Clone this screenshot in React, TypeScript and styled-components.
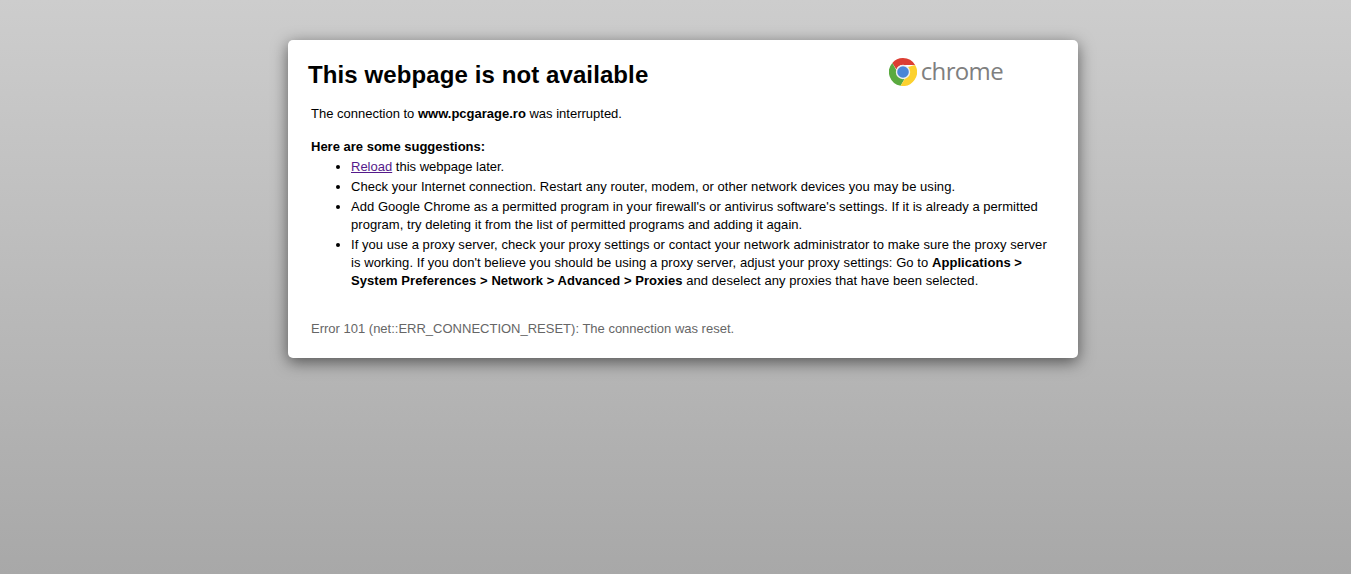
import styled, { createGlobalStyle } from 'styled-components'

const Global = createGlobalStyle`
  html, body {
    margin: 0;
    height: 100%;
  }
  body {
    background: linear-gradient(#cdcdcd, #a8a8a8);
    background-repeat: no-repeat;
    font-family: "Liberation Sans", Arial, sans-serif;
    font-size: 13px;
    color: #000;
  }
`

const Page = styled.div`
  min-height: 574px;
  padding: 40px 0 0 288px;
  box-sizing: border-box;
`

const Card = styled.main`
  width: 790px;
  height: 318px;
  padding: 18px 20px 0;
  box-sizing: border-box;
  background: #fff;
  border-radius: 5px;
  box-shadow: 0 4px 16px rgba(0, 0, 0, 0.55);
`

const Header = styled.header`
  display: flex;
  justify-content: space-between;
  height: 36px;
`

const Title = styled.h1`
  margin: 0;
  font-size: 24px;
  line-height: 34px;
  letter-spacing: 0.1px;
  font-weight: bold;
`

const Logo = styled.div`
  display: flex;
  align-items: center;
  gap: 4px;
  height: 28px;
  margin-right: 55px;
`

const Wordmark = styled.span`
  font-family: "Open Sans", "Noto Sans", sans-serif;
  font-size: 24px;
  line-height: 28px;
  letter-spacing: -0.65px;
  color: #7f7f7f;
  padding-bottom: 3px;
`

const Body = styled.div`
  padding: 0 3px;
`

const Paragraph = styled.p`
  margin: 11px 0 15px;
  line-height: 18px;
`

const Heading = styled.div`
  font-weight: bold;
  line-height: 18px;
`

const List = styled.ul`
  margin: 2px 0 0;
  padding: 0 0 0 40px;
  width: 704px;
`

const Item = styled.li<{ $spread?: number }>`
  line-height: 18px;
  margin-bottom: 2px;
  letter-spacing: ${(p) => (p.$spread ? `${p.$spread}px` : 'normal')};
`

const Visited = styled.a`
  color: #551a8b;
  text-decoration: underline;
`

const ErrorCode = styled.div`
  margin-top: 30px;
  line-height: 18px;
  color: #666;
`

function ChromeLogo() {
  return (
    <svg width="28" height="28" viewBox="0 0 28 28" aria-hidden="true">
      <path d="M14 0a14 14 0 0 1 12.1 7H14a7 7 0 0 0-6.6 4.6L3.3 4.9A14 14 0 0 1 14 0z" fill="#dc3e33" />
      <path d="M3.3 4.9l5.9 10.5a7 7 0 0 0 6.5 5.4L11.600 27.800A14 14 0 0 1 3.300 4.900z" fill="#5aaa3f" />
      <path d="M26.100 7A14 14 0 0 1 11.600 27.800l5.900-9.800A7 7 0 0 0 18.800 9z" fill="#fcd12f" />
      <circle cx="14" cy="14" r="7.200" fill="#f1f1f1" />
      <circle cx="14" cy="14" r="5.800" fill="#4a86d8" />
    </svg>
  )
}

export default function App() {
  return (
    <>
      <Global />
      <Page>
        <Card>
          <Header>
            <Title>This webpage is not available</Title>
            <Logo>
              <ChromeLogo />
              <Wordmark>chrome</Wordmark>
            </Logo>
          </Header>
          <Body>
            <Paragraph>
              The connection to <b>www.pcgarage.ro</b> was interrupted.
            </Paragraph>
            <Heading>Here are some suggestions:</Heading>
            <List>
              <Item>
                <Visited href="#">Reload</Visited> this webpage later.
              </Item>
              <Item $spread={0.05}>Check your Internet connection. Restart any router, modem, or other network devices you may be using.</Item>
              <Item $spread={0.04}>
                Add Google Chrome as a permitted program in your firewall's or antivirus software's settings. If it is already a permitted program, try deleting it from the list of permitted programs and adding it again.
              </Item>
              <Item $spread={0.06}>
                If you use a proxy server, check your proxy settings or contact your network administrator to make sure the proxy server is working. If you don't believe you should be using a proxy server, adjust your proxy settings: Go to <b>Applications &gt; System Preferences &gt; Network &gt; Advanced &gt; Proxies</b> and deselect any proxies that have been selected.
              </Item>
            </List>
            <ErrorCode>Error 101 (net::ERR_CONNECTION_RESET): The connection was reset.</ErrorCode>
          </Body>
        </Card>
      </Page>
    </>
  )
}
